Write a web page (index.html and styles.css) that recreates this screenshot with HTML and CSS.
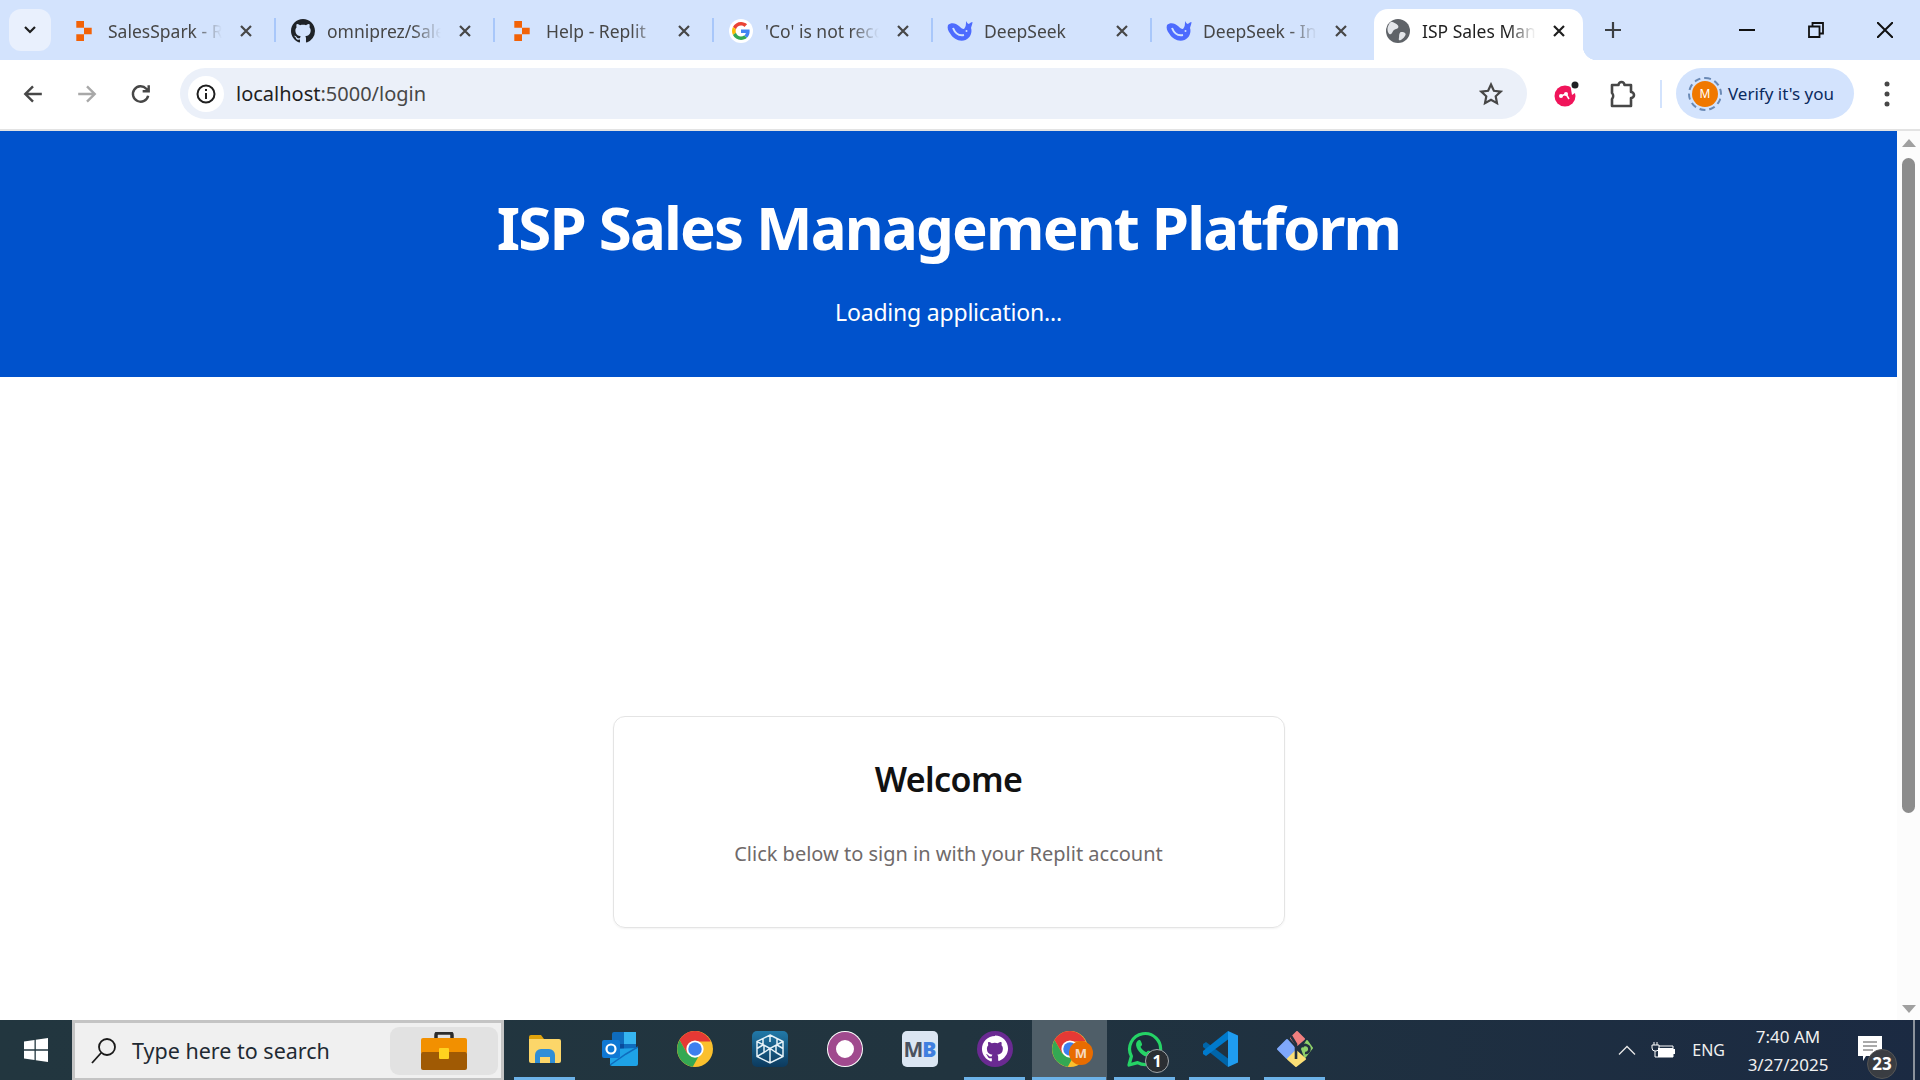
FILE: index.html
```html
<!DOCTYPE html>
<html lang="en">
<head>
    <meta charset="UTF-8">
    <title>ISP Sales Management Platform</title>
    <link rel="stylesheet" href="styles.css">
</head>
<body>

    <svg class="icon-defs" width="0" height="0">
        <symbol id="i-replit" viewBox="0 0 16 20">
            <path fill="#f26207" d="M1 1h7v6H1zM8 7h7v6H8zM1 13h7v6H1z"/>
        </symbol>
        <symbol id="i-close" viewBox="0 0 14 14">
            <path d="M2 2l10 10M12 2L2 12" fill="none" stroke="currentColor" stroke-width="2.2"/>
        </symbol>
        <symbol id="i-whale" viewBox="0 0 26 22">
            <path fill="#4d6bfe" d="M1 5C4 2 9 3 12 6c2 2 3 3 5 3 2-2 2-5 2-8 1 2 2 3 3 3 1-1 2-2 3.500-2 0 2-1 4-1.500 6 1.500 4-.5 10-5.500 12-6 2-12-1-15-6C1 11 0 8 1 5z"/>
            <path d="M6 8c2 5 6 8 11 7" fill="none" stroke="#d3e3fd" stroke-width="2"/>
            <circle cx="19.500" cy="11" r="1" fill="#d3e3fd"/>
        </symbol>
        <symbol id="i-chrome" viewBox="0 0 48 48">
            <circle cx="24" cy="24" r="24" fill="#fbc02d"/>
            <path fill="#e53935" d="M24 0C15.500 0 7.700 4.500 3.400 12l10.200 18L24 14h21C41 5.600 33 0 24 0z"/>
            <path fill="#34a853" d="M3.400 12A24 24 0 0 0 21 47.800L31 30 13.600 30z"/>
            <circle cx="24" cy="24" r="11.500" fill="#fff"/>
            <circle cx="24" cy="24" r="9" fill="#3d7fef"/>
        </symbol>
    </svg>

    <div class="tab-strip">
        <button class="tab-search">
            <svg width="14" height="10" viewBox="0 0 14 10"><path d="M2 2l5 5 5-5" fill="none" stroke="#1f1f1f" stroke-width="2.2"/></svg>
        </button>
        <div class="tab tab-first">
            <svg class="favicon"><use href="#i-replit"/></svg>
            <span class="tab-title">SalesSpark - Replit</span>
            <svg class="tab-close"><use href="#i-close"/></svg>
        </div>
        <div class="tab">
            <svg class="favicon favicon-big" viewBox="0 0 16 16"><path fill="#1f2328" d="M8 0C3.580 0 0 3.580 0 8c0 3.540 2.290 6.530 5.470 7.590.4.070.55-.17.55-.38 0-.19-.01-.82-.01-1.490-2.010.37-2.530-.49-2.690-.94-.09-.23-.48-.94-.82-1.130-.28-.15-.68-.52-.01-.53.63-.01 1.080.58 1.230.82.72 1.210 1.870.87 2.330.66.07-.52.28-.87.51-1.070-1.780-.2-3.640-.89-3.640-3.950 0-.87.31-1.590.82-2.150-.08-.2-.36-1.020.08-2.120 0 0 .67-.21 2.200.82.64-.18 1.320-.27 2-.27s1.360.09 2 .27c1.530-1.040 2.200-.82 2.200-.82.44 1.100.16 1.920.08 2.120.51.56.82 1.270.82 2.150 0 3.070-1.870 3.750-3.650 3.950.29.25.54.73.54 1.480 0 1.070-.01 1.930-.01 2.200 0 .21.15.46.55.38A8.013 8.013 0 0 0 16 8c0-4.420-3.580-8-8-8z"/></svg>
            <span class="tab-title">omniprez/SalesSpark</span>
            <svg class="tab-close"><use href="#i-close"/></svg>
        </div>
        <div class="tab">
            <svg class="favicon"><use href="#i-replit"/></svg>
            <span class="tab-title">Help - Replit</span>
            <svg class="tab-close"><use href="#i-close"/></svg>
        </div>
        <div class="tab">
            <span class="google-badge">
                <svg width="18" height="18" viewBox="0 0 48 48">
                    <path fill="#EA4335" d="M24 9.500c3.540 0 6.710 1.220 9.210 3.600l6.850-6.850C35.900 2.380 30.470 0 24 0 14.620 0 6.510 5.380 2.560 13.220l7.980 6.190C12.430 13.720 17.740 9.500 24 9.500z"/>
                    <path fill="#4285F4" d="M46.980 24.550c0-1.570-.15-3.090-.38-4.550H24v9.020h12.940c-.58 2.960-2.260 5.480-4.780 7.180l7.730 6c4.510-4.180 7.090-10.360 7.090-17.650z"/>
                    <path fill="#FBBC05" d="M10.530 28.590c-.48-1.450-.76-2.990-.76-4.590s.27-3.140.76-4.590l-7.980-6.190C.92 16.460 0 20.120 0 24c0 3.880.92 7.540 2.560 10.780l7.970-6.190z"/>
                    <path fill="#34A853" d="M24 48c6.480 0 11.930-2.130 15.890-5.810l-7.730-6c-2.150 1.450-4.920 2.300-8.160 2.300-6.260 0-11.570-4.220-13.470-9.910l-7.980 6.190C6.510 42.620 14.620 48 24 48z"/>
                </svg>
            </span>
            <span class="tab-title">'Co' is not recognized</span>
            <svg class="tab-close"><use href="#i-close"/></svg>
        </div>
        <div class="tab">
            <svg class="favicon favicon-wide"><use href="#i-whale"/></svg>
            <span class="tab-title">DeepSeek</span>
            <svg class="tab-close"><use href="#i-close"/></svg>
        </div>
        <div class="tab">
            <svg class="favicon favicon-wide"><use href="#i-whale"/></svg>
            <span class="tab-title">DeepSeek - Into the Unknown</span>
            <svg class="tab-close"><use href="#i-close"/></svg>
        </div>
        <div class="tab tab-active">
            <svg class="favicon favicon-big" viewBox="0 0 22 22">
                <circle cx="11" cy="11" r="11" fill="#5f6368"/>
                <path fill="#e4e6ea" d="M5 2.500c2 .5 5 2 6 3.500.8 1.200.2 2.500-1 3s-2.500.5-3.500 2-1.500 3.500-3 3S1 10 1.500 8 3.500 2.500 5 2.500zM14 12c2 0 4 .5 4 2s-3 5-5 5.500-1-2-1-3.500 .5-4 2-4z"/>
            </svg>
            <span class="tab-title">ISP Sales Management</span>
            <svg class="tab-close"><use href="#i-close"/></svg>
        </div>
        <svg class="new-tab" width="16" height="16" viewBox="0 0 16 16"><path d="M8 0v16M0 8h16" stroke="#3c4043" stroke-width="2.200"/></svg>
        <div class="window-controls">
            <svg width="16" height="16" viewBox="0 0 16 16"><path d="M0 8h16" stroke="#111" stroke-width="2"/></svg>
            <svg width="16" height="16" viewBox="0 0 16 16"><path d="M1 4.500h10.500V15H1zM4.500 4V1H15v10.500h-3" fill="none" stroke="#111" stroke-width="1.800"/></svg>
            <svg width="16" height="16" viewBox="0 0 16 16"><path d="M0 0l16 16M16 0L0 16" stroke="#111" stroke-width="2"/></svg>
        </div>
    </div>

    <div class="toolbar">
        <svg class="nav-icon" viewBox="0 0 20 20"><path d="M18 10H3M10 3l-7 7 7 7" fill="none" stroke="#474747" stroke-width="2.200"/></svg>
        <svg class="nav-icon" viewBox="0 0 20 20"><path d="M2 10h15M10 3l7 7-7 7" fill="none" stroke="#a8a8a8" stroke-width="2.200"/></svg>
        <svg class="nav-icon" viewBox="0 0 20 20"><path d="M16.500 11.500a7 7 0 1 1-1.700-6.300L17 7.500M17 2v5.500h-5.500" fill="none" stroke="#474747" stroke-width="2.200"/></svg>
        <div class="omnibox">
            <span class="site-info">
                <svg width="20" height="20" viewBox="0 0 20 20">
                    <circle cx="10" cy="10" r="8.500" fill="none" stroke="#1f1f1f" stroke-width="2"/>
                    <path d="M10 9v6M10 5v2" stroke="#1f1f1f" stroke-width="2"/>
                </svg>
            </span>
            <span class="url">localhost<span class="url-rest">:5000/login</span></span>
            <svg class="star" width="24" height="24" viewBox="0 0 24 24"><path d="M12 2.500l2.900 6.300 6.800.8-5 4.700 1.300 6.800-6-3.400-6 3.400 1.300-6.800-5-4.700 6.800-.8z" fill="none" stroke="#474747" stroke-width="2.200"/></svg>
        </div>
        <svg class="ext-icon" width="28" height="30" viewBox="0 0 28 30">
            <circle cx="12" cy="17" r="10.500" fill="#f0145a"/>
            <path d="M8 17l5-2 3 5" fill="none" stroke="#fff" stroke-width="1.500"/>
            <circle cx="8" cy="17" r="2" fill="#fff"/><circle cx="13" cy="15" r="2" fill="#fff"/>
            <path d="M17 4l8 8-6 4z" fill="#fff"/>
            <circle cx="22" cy="6" r="3.500" fill="#202124"/>
        </svg>
        <svg class="ext-icon puzzle" width="26" height="28" viewBox="0 0 26 28"><path d="M2 5h6.500a3 3 0 0 1 6 0H21v7a3 3 0 0 1 0 6v8H2v-7a4.500 4.500 0 0 0 0-6z" fill="none" stroke="#474747" stroke-width="2.600" stroke-linejoin="round"/></svg>
        <span class="toolbar-divider"></span>
        <div class="verify-pill">
            <span class="avatar">M</span>
            <span>Verify it's you</span>
        </div>
        <svg class="more-icon" width="6" height="26" viewBox="0 0 6 26"><circle cx="3" cy="3" r="2.500" fill="#474747"/><circle cx="3" cy="13" r="2.500" fill="#474747"/><circle cx="3" cy="23" r="2.500" fill="#474747"/></svg>
    </div>

    <div class="viewport">
        <div class="page">
            <header class="banner">
                <h1>ISP Sales Management Platform</h1>
                <p>Loading application...</p>
            </header>
            <div class="login-card">
                <h2>Welcome</h2>
                <p>Click below to sign in with your Replit account</p>
            </div>
        </div>
        <div class="scrollbar">
            <span class="arrow-up"></span>
            <span class="thumb"></span>
            <span class="arrow-down"></span>
        </div>
    </div>

    <div class="taskbar">
        <button class="start-btn">
            <svg width="26" height="26" viewBox="0 0 26 26"><path fill="#fff" d="M1 4.500l10.500-1.500v9.300H1zM12.800 2.800L25 1v11.300H12.800zM1 13.700h10.500V23L1 21.500zM12.800 13.700H25V25l-12.200-1.800z"/></svg>
        </button>
        <div class="search-box">
            <svg width="26" height="28" viewBox="0 0 26 28"><circle cx="16" cy="10" r="8" fill="none" stroke="#1a1a1a" stroke-width="1.800"/><path d="M10 16L1 26" stroke="#1a1a1a" stroke-width="1.800"/></svg>
            <span class="search-text">Type here to search</span>
            <span class="search-promo">
                <svg width="46" height="38" viewBox="0 0 46 38">
                    <path d="M15 8V3a2 2 0 0 1 2-2h12a2 2 0 0 1 2 2v5" fill="none" stroke="#2c2c2c" stroke-width="3.500"/>
                    <rect y="6" width="46" height="16" rx="2" fill="#f29000"/>
                    <rect y="20" width="46" height="18" rx="2" fill="#a05a04"/>
                    <rect x="18" y="16" width="10" height="11" rx="1" fill="#ffd21f"/>
                </svg>
            </span>
        </div>
        <div class="task-icons">
            <div class="task-item running">
                <svg width="32" height="28" viewBox="0 0 32 28">
                    <path d="M0 2a2 2 0 0 1 2-2h10l3 4h-15z" fill="#e0a30c"/>
                    <path d="M0 4h30a2 2 0 0 1 2 2v20a2 2 0 0 1-2 2H2a2 2 0 0 1-2-2z" fill="#fcd669"/>
                    <path d="M6 28v-8a6 6 0 0 1 6-6h8a6 6 0 0 1 6 6v8h-5v-6h-10v6z" fill="#2f8ed6"/>
                </svg>
            </div>
            <div class="task-item">
                <svg width="36" height="34" viewBox="0 0 36 34">
                    <rect x="10" width="24" height="24" rx="2" fill="#0f6cbd"/>
                    <rect x="22" width="12" height="12" fill="#36b5f0"/>
                    <rect x="10" y="12" width="12" height="12" fill="#0a4c9c"/>
                    <path d="M8 17l28-1v16a2 2 0 0 1-2 2H10a2 2 0 0 1-2-2z" fill="#1ea2e6"/>
                    <path d="M8 33l16-11 12-7" fill="none" stroke="#0f6cbd" stroke-width="1.500"/>
                    <rect y="8" width="18" height="18" rx="2" fill="#0f78d4"/>
                    <circle cx="9" cy="17" r="4.500" fill="none" stroke="#fff" stroke-width="2.200"/>
                </svg>
            </div>
            <div class="task-item">
                <svg width="36" height="36"><use href="#i-chrome"/></svg>
            </div>
            <div class="task-item">
                <span class="cube-tile">
                    <svg width="30" height="30" viewBox="0 0 30 30"><path d="M15 1l13 6.500v15L15 29 2 22.500v-15zM15 1v7M2 7.500l13 7 13-7M15 14.500V29M8 4.500v6.500l-6 3.500M22 4.500v6.500l6 3.500M2 22.500l7-4V11M28 22.500l-7-4V11M9 18.500l6-4 6 4" fill="none" stroke="#e6f2f8" stroke-width="1.500"/></svg>
                </span>
            </div>
            <div class="task-item"><span class="ring-icon"></span></div>
            <div class="task-item"><span class="mb-tile">M<b>B</b></span></div>
            <div class="task-item running">
                <svg width="36" height="36" viewBox="0 0 16 16">
                    <circle cx="8" cy="8" r="8" fill="#6a2a92"/>
                    <path fill="#fff" d="M8 2.200c-3.200 0-5.800 2.600-5.800 5.800 0 2.500 1.700 4.700 4 5.500.3 0 .4-.1.400-.3v-1.100c-1.500.3-1.800-.7-1.800-.7-.3-.6-.6-.8-.6-.8-.5-.3 0-.3 0-.3.500 0 .8.500.8.500.5.800 1.200.6 1.600.4 0-.3.200-.6.300-.7-1.200-.1-2.500-.6-2.500-2.700 0-.6.200-1.100.6-1.500 0-.1-.2-.7 0-1.400 0 0 .5-.2 1.500.5.500-.1.900-.2 1.400-.2s1 .1 1.400.2c1-.7 1.500-.5 1.500-.5.300.7.100 1.300.1 1.400.4.400.6.900.6 1.500 0 2.100-1.300 2.600-2.500 2.700.2.200.4.500.4 1v1.500c0 .2.100.3.400.3 2.300-.8 4-3 4-5.500 0-3.200-2.600-5.800-5.800-5.800z"/>
                </svg>
            </div>
            <div class="task-item running active">
                <svg width="36" height="36"><use href="#i-chrome"/></svg>
                <span class="chrome-badge">M</span>
            </div>
            <div class="task-item running">
                <svg width="36" height="36" viewBox="0 0 36 36">
                    <path d="M2 34l2.400-8.700A15.500 15.500 0 1 1 10.600 31.600z" fill="#1c2d3a" stroke="#25d366" stroke-width="3.200" stroke-linejoin="round"/>
                    <path d="M12 9c1 0 1.500.2 2 1.500l1 2.500c.2.700 0 1.200-.5 1.800l-1 1c1 2.200 3.500 4.500 5.800 5.500l1.200-1.200c.5-.5 1-.6 1.700-.3l2.600 1.300c.8.500 1 1 .8 1.800-.5 2-2.500 3.300-4.500 3-5.500-.8-11-6-12-11.500-.3-2.500 1-5 2.900-5.400z" fill="#25d366"/>
                </svg>
                <span class="count-badge">1</span>
            </div>
            <div class="task-item running">
                <svg width="36" height="36" viewBox="0 0 36 36">
                    <path d="M1 13l3-2 22 16.500V36L1 16z" fill="#0065a9"/>
                    <path d="M1 23l3 2L26 8.500V0L1 20z" fill="#007acc"/>
                    <path d="M26 0l10 4.500v27L26 36z" fill="#1f9cf0"/>
                </svg>
            </div>
            <div class="task-item running">
                <svg width="36" height="36" viewBox="0 0 36 36">
                    <g stroke-width="2" stroke-linejoin="round">
                        <path d="M14 7l6-6 7 7-7 6z" fill="#f07f7f" stroke="#f07f7f"/>
                        <path d="M1 18l9-9 9 10-9 8z" fill="#7fa8fa" stroke="#7fa8fa"/>
                        <path d="M25 18l5-8 5 7-7 9z" fill="#8fd16a" stroke="#8fd16a"/>
                        <path d="M11 28l8-8 9 8-9 7z" fill="#fbdf76" stroke="#fbdf76"/>
                    </g>
                    <path d="M14 5l5 8v15M25 16a4 4 0 1 1 3 6" fill="none" stroke="#22303f" stroke-width="2.600"/>
                </svg>
            </div>
        </div>
        <div class="tray">
            <svg width="18" height="10" viewBox="0 0 18 10"><path d="M1 9.500l8-8 8 8" fill="none" stroke="#e8e8e8" stroke-width="1.300"/></svg>
            <svg class="battery" width="24" height="16" viewBox="0 0 24 16"><path d="M3 0v3M6 0v3M1 3h7v3a3 3 0 0 1-3 3H4a3 3 0 0 1-3-3zM4 9v6h18v-11H8" fill="none" stroke="#fff" stroke-width="1"/><rect x="7" y="6" width="15" height="9" fill="#fff"/><rect x="22" y="7" width="2" height="5" fill="#fff"/></svg>
            <span class="lang">ENG</span>
            <div class="clock">
                <span>7:40 AM</span>
                <span>3/27/2025</span>
            </div>
            <div class="notify">
                <svg width="24" height="28" viewBox="0 0 24 28"><path d="M0 0h24v20h-16l-3 5v-5H0z" fill="#fff"/><path d="M5 6h14M5 10h14M5 14h10" stroke="#555" stroke-width="1"/></svg>
                <span class="notify-count">23</span>
            </div>
            <span class="show-desktop"></span>
        </div>
    </div>

</body>
</html>
```

FILE: styles.css
```css
* {
    box-sizing: border-box;
}

html, body {
    height: 100%;
}

body {
    margin: 0;
    display: flex;
    flex-direction: column;
    overflow: hidden;
    background-color: #fff;
    font-family: "Noto Sans", sans-serif;
    color: #1f1f1f;
}

.icon-defs {
    position: absolute;
}

/* browser tabs */
.tab-strip {
    height: 60px;
    flex: none;
    display: flex;
    align-items: flex-end;
    background-color: #d3e3fd;
}

.tab-search {
    width: 42px;
    height: 42px;
    margin: 0 4px 9px 9px;
    padding: 0;
    border: none;
    border-radius: 12px;
    background-color: #e9f0fd;
    display: flex;
    align-items: center;
    justify-content: center;
}

.tab {
    position: relative;
    width: 219px;
    height: 51px;
    padding-left: 20px;
    flex: none;
    display: flex;
    align-items: center;
    color: #474747;
}

.tab::before {
    content: "";
    position: absolute;
    left: 0;
    top: 9px;
    width: 2px;
    height: 24px;
    background-color: #a8c7fa;
}

.tab-first::before,
.tab-active::before {
    display: none;
}

.favicon {
    width: 18px;
    height: 22px;
    flex: none;
    margin-bottom: 8px;
}

.favicon-big {
    width: 24px;
    height: 24px;
    margin-left: -3px;
    margin-right: -3px;
}

.favicon-wide {
    width: 26px;
    height: 22px;
    margin-left: -4px;
    margin-right: -4px;
}

.google-badge {
    width: 24px;
    height: 24px;
    margin: 0 -3px 8px;
    flex: none;
    border-radius: 50%;
    background-color: #fff;
    display: flex;
    align-items: center;
    justify-content: center;
}

.tab-title {
    width: 114px;
    margin-left: 15px;
    margin-bottom: 7px;
    font-size: 17.500px;
    white-space: nowrap;
    overflow: hidden;
    -webkit-mask-image: linear-gradient(to right, #000 75%, transparent);
    mask-image: linear-gradient(to right, #000 75%, transparent);
}

.tab-close {
    width: 14px;
    height: 14px;
    margin-left: 17px;
    margin-bottom: 8px;
    flex: none;
    color: #474747;
}

.tab-active {
    width: 209px;
    margin-left: 5px;
    margin-right: 5px;
    padding-left: 15px;
    background-color: #fff;
    border-radius: 14px 14px 0 0;
    color: #1f1f1f;
}

.tab-active .tab-close {
    margin-left: 16px;
    color: #1f1f1f;
}

.tab-active::after {
    content: "";
    position: absolute;
    right: -14px;
    bottom: 0;
    width: 14px;
    height: 14px;
    background: radial-gradient(circle at 100% 0, transparent 14px, #fff 14.500px);
}

.new-tab {
    margin: 0 0 22px 17px;
    flex: none;
}

.window-controls {
    margin-left: auto;
    margin-bottom: 22px;
    padding-right: 27px;
    display: flex;
    gap: 53px;
}

/* address bar row */
.toolbar {
    height: 71px;
    flex: none;
    padding: 9px 0 11px;
    display: flex;
    align-items: center;
    border-bottom: 2px solid #e3e3e3;
    border-radius: 14px 14px 0 0;
    background-color: #fff;
}

.nav-icon {
    width: 22px;
    height: 22px;
    margin-left: 22px;
    margin-right: 10px;
    flex: none;
}

.omnibox {
    width: 1347px;
    height: 51px;
    margin-left: 18px;
    padding: 0 24px 0 8px;
    display: flex;
    align-items: center;
    border-radius: 26px;
    background-color: #ebf0f9;
}

.site-info {
    width: 36px;
    height: 36px;
    border-radius: 50%;
    background-color: #fff;
    display: flex;
    align-items: center;
    justify-content: center;
}

.url {
    margin-left: 12px;
    font-size: 20px;
    color: #1f1f1f;
}

.url-rest {
    color: #474747;
}

.star {
    margin-left: auto;
}

.ext-icon {
    margin-left: 26px;
    flex: none;
}

.puzzle {
    margin-left: 29px;
}

.toolbar-divider {
    width: 2px;
    height: 28px;
    margin: 0 14px 0 24px;
    background-color: #d3e3fd;
}

.verify-pill {
    width: 178px;
    height: 51px;
    padding-left: 15px;
    display: flex;
    align-items: center;
    gap: 9px;
    border-radius: 26px;
    background-color: #d3e3fd;
    font-size: 17px;
    color: #0a2a5e;
    white-space: nowrap;
}

.avatar {
    width: 26px;
    height: 26px;
    margin: 0 1px;
    flex: none;
    border-radius: 50%;
    background-color: #f07800;
    outline: 2px dashed #6b8ab5;
    outline-offset: 2px;
    color: #fff;
    font-size: 12px;
    text-align: center;
    line-height: 26px;
}

.more-icon {
    margin-left: 30px;
    flex: none;
}

/* page content */
.viewport {
    flex: 1;
    min-height: 0;
    display: flex;
}

.page {
    flex: 1;
    min-width: 0;
}

.banner {
    height: 246px;
    padding-top: 58px;
    background-color: #0052cc;
    color: #fff;
    text-align: center;
}

.banner h1 {
    margin: 0;
    font-size: 60px;
    line-height: 76px;
    font-weight: 700;
    letter-spacing: -1.850px;
}

.banner p {
    margin: 31px 0 0;
    font-size: 23px;
    line-height: 32px;
    letter-spacing: -0.200px;
}

.login-card {
    width: 672px;
    height: 212px;
    margin: 339px auto 0;
    padding-top: 38px;
    border: 1px solid #e4e4e4;
    border-radius: 12px;
    box-shadow: 0 1px 2px rgba(0, 0, 0, 0.05);
    text-align: center;
}

.login-card h2 {
    margin: 0;
    font-size: 34px;
    line-height: 48px;
    font-weight: 600;
    letter-spacing: -0.600px;
    color: #111;
}

.login-card p {
    margin: 37px 0 0;
    font-size: 20px;
    line-height: 28px;
    color: #6f6a6a;
}

.scrollbar {
    width: 23px;
    flex: none;
    padding: 8px 0 7px;
    display: flex;
    flex-direction: column;
    align-items: center;
    background-color: #fcfcfc;
}

.arrow-up,
.arrow-down {
    width: 0;
    height: 0;
    flex: none;
    border-left: 7.500px solid transparent;
    border-right: 7.500px solid transparent;
}

.arrow-up {
    border-bottom: 8px solid #a0a0a0;
}

.arrow-down {
    margin-top: auto;
    border-top: 8px solid #a0a0a0;
}

.thumb {
    width: 13px;
    height: 655px;
    margin-top: 11px;
    border-radius: 7px;
    background-color: #8c8c8c;
}

/* windows taskbar */
.taskbar {
    height: 60px;
    flex: none;
    display: flex;
    background: linear-gradient(to right, #22363f 0%, #21343f 50%, #1b2a42 100%);
    color: #fff;
}

.start-btn {
    width: 72px;
    padding: 0;
    border: none;
    background: none;
    display: flex;
    align-items: center;
    justify-content: center;
}

.search-box {
    width: 432px;
    padding-left: 16px;
    display: flex;
    align-items: center;
    border: 3px solid #c4c4c4;
    border-bottom-width: 2px;
    background-color: #f0f0f0;
    color: #1f2a33;
}

.search-text {
    margin-left: 15px;
    font-size: 21.500px;
    white-space: nowrap;
}

.search-promo {
    width: 108px;
    height: 48px;
    margin-left: auto;
    margin-right: 3px;
    border-radius: 9px;
    background-color: #e2e2e2;
    display: flex;
    align-items: center;
    justify-content: center;
}

.task-icons {
    margin-left: 3px;
    display: flex;
}

.task-item {
    position: relative;
    width: 75px;
    display: flex;
    align-items: center;
    justify-content: center;
    padding-bottom: 2px;
}

.task-item.running::after {
    content: "";
    position: absolute;
    left: 7px;
    right: 7px;
    bottom: 0;
    height: 3px;
    background-color: #6cb2e8;
}

.task-item.active {
    background-color: #4f5e68;
}

.task-item.active::after {
    left: 0;
    right: 1px;
}

.cube-tile {
    width: 36px;
    height: 36px;
    border-radius: 5px;
    background: linear-gradient(#2279a8, #0c3a5e);
    display: flex;
    align-items: center;
    justify-content: center;
}

.ring-icon {
    width: 34px;
    height: 34px;
    border-radius: 50%;
    border: 8px solid #a04a8e;
    background-color: #fff;
    box-shadow: 0 0 0 1px #fff;
}

.mb-tile {
    width: 36px;
    height: 36px;
    border-radius: 5px;
    background-color: #dbe6f3;
    color: #4a5260;
    font-size: 21px;
    font-weight: 700;
    line-height: 36px;
    text-align: center;
    letter-spacing: -1px;
}

.mb-tile b {
    color: #3f7fe0;
}

.chrome-badge {
    position: absolute;
    left: 37px;
    top: 21px;
    width: 24px;
    height: 24px;
    border-radius: 50%;
    background-color: #e86c00;
    color: #f5d9c0;
    font-size: 13px;
    font-weight: 700;
    line-height: 24px;
    text-align: center;
}

.count-badge {
    position: absolute;
    left: 38px;
    top: 29px;
    width: 24px;
    height: 24px;
    border-radius: 50%;
    border: 1px solid #a0a6aa;
    background-color: #2b2f33;
    color: #fff;
    font-size: 16px;
    font-weight: 700;
    line-height: 22px;
    text-align: center;
}

.tray {
    position: relative;
    margin-left: auto;
    padding-right: 7px;
    display: flex;
    align-items: center;
}

.battery {
    margin-left: 15px;
}

.lang {
    margin-left: 17px;
    font-size: 16px;
    color: #f0f0f0;
}

.clock {
    width: 90px;
    margin-left: 18px;
    display: flex;
    flex-direction: column;
    align-items: center;
    gap: 5px;
    font-size: 17px;
    line-height: 23px;
    color: #f0f0f0;
}

.notify {
    position: relative;
    width: 24px;
    height: 28px;
    margin: 0 31px 0 25px;
}

.notify-count {
    position: absolute;
    left: 9px;
    top: 13px;
    width: 30px;
    height: 30px;
    border-radius: 50%;
    background-color: #3a3d42;
    border: 1px solid #555;
    color: #fff;
    font-size: 17px;
    font-weight: 700;
    line-height: 27px;
    text-align: center;
}

.show-desktop {
    position: absolute;
    right: 5px;
    top: 0;
    bottom: 0;
    width: 2px;
    background-color: #8b929c;
}
```
